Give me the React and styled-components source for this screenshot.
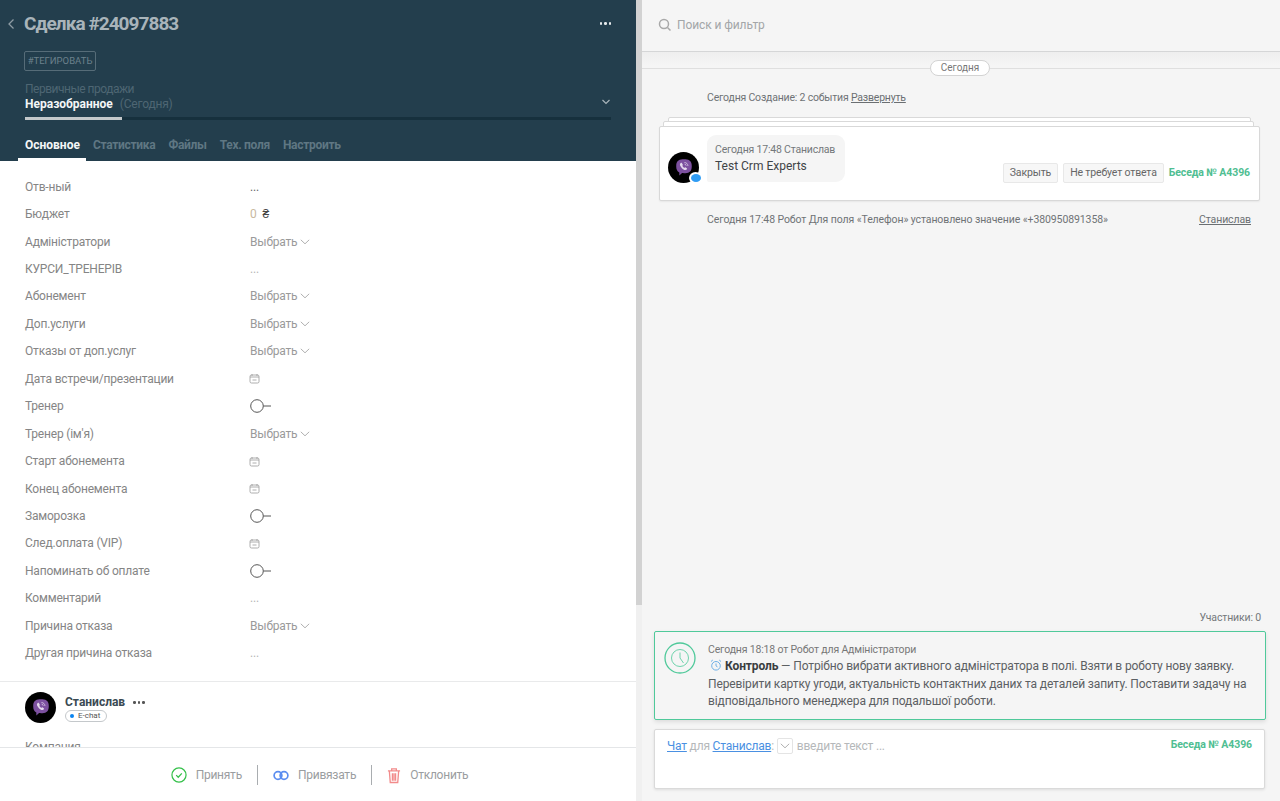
import React from 'react';
import styled, { createGlobalStyle } from 'styled-components';

const Global = createGlobalStyle`
  html, body { margin: 0; padding: 0; height: 100%; overflow: hidden; background: #f5f5f5; }
  body { font-family: Roboto, "Liberation Sans", sans-serif; }
  #root { height: 801px; }
  * { box-sizing: border-box; }
`;
const Page = styled.div`display: flex; width: 1280px; height: 801px; overflow: hidden;`;
const LeftPane = styled.div`width: 636px; height: 801px; display: flex; flex-direction: column; background: #fff; overflow: hidden;`;
const ScrollGutter = styled.div`width: 6px; height: 801px; background: #f0f0f0; display: flex; flex-direction: column; flex: none;`;
const ScrollThumb = styled.div`width: 100%; height: 605px; background: #d2d2d2;`;
const Header = styled.header`height: 161px; flex: none; background: #233e4d; display: flex; flex-direction: column; padding: 11px 25px 0 24px;`;
const TitleRow = styled.div`display: flex; align-items: center; height: 25px; position: relative;`;
const Back = styled.svg`width: 8px; height: 12px; margin-left: -17px; margin-right: 9px; flex: none;`;
const Title = styled.h1`margin: 0; font: 700 19px/25px Roboto, sans-serif; color: #a9b4ba; letter-spacing: -0.95px; flex: 1;`;
const More = styled.div`display: flex; gap: 2px;`;
const Dot = styled.i`width: 2.5px; height: 2.5px; border-radius: 50%; background: ${p => p.$c || '#e6eaec'}; display: block;`;
const TagBtn = styled.div`align-self: flex-start; margin-top: 15px; height: 20px; width: 72px; border: 1px solid #566c78; border-radius: 2px; font: 400 9.5px/18px Roboto, sans-serif; color: #6c818c; text-align: center; white-space: nowrap;`;
const PipeLabel = styled.div`margin-top: 13px; padding-left: 1px; font: 400 12px/11px Roboto, sans-serif; letter-spacing: -0.5px; color: #4e6673;`;
const StatusRow = styled.div`display: flex; align-items: center; justify-content: space-between; padding-left: 1px; height: 14px;`;
const Status = styled.span`font: 700 12px/14px Roboto, sans-serif; color: #f4f6f7;`;
const StatusDate = styled.span`font: 400 12px/14px Roboto, sans-serif; color: #4e6673; margin-left: 7px; letter-spacing: -0.2px;`;
const Progress = styled.div`height: 3px; margin: 8px 0 0 1px; background: #16303d;`;
const ProgressFill = styled.div`height: 100%; width: 97px; background: #c4c8ca;`;
const Tabs = styled.nav`margin-top: 12px; display: flex; gap: 13px; flex: 1;`;
const Tab = styled.div`font: 700 12px/26px Roboto, sans-serif; color: ${p => p.$active ? '#f4f6f7' : '#5f7783'}; letter-spacing: ${p => p.$active ? '0' : '-0.3px'}; position: relative; white-space: nowrap; padding-left: ${p => p.$active ? '1px' : 0};
  ${p => p.$active && `&::after { content: ""; position: absolute; left: -6px; right: -6px; bottom: 0; height: 3px; background: #fff; }`}`;
const Body = styled.div`flex: 1; min-height: 0; overflow: hidden; background: #fff;`;
const Fields = styled.div`padding: 12px 0 0 25px;`;
const Row = styled.div`display: flex; align-items: center; height: 27.45px; font: 400 12px/16px Roboto, sans-serif; letter-spacing: -0.2px;`;
const Label = styled.div`width: 225px; color: #858585; flex: none;`;
const Value = styled.div`display: flex; align-items: center; gap: 3px; color: ${p => p.$c || '#9a9a9a'};`;
const BudgetNum = styled.span`color: #c9b9a0; margin-right: 3px;`;
const Currency = styled.span`color: #444;`;
const DateIcon = styled.svg`width: 11px; height: 11px; margin-left: -1px;`;
const Divider = styled.div`height: 1px; background: #e9eaeb; margin-top: 14.5px;`;
const Contact = styled.div`display: flex; padding: 10px 25px 0; gap: 9px;`;
const Avatar = styled.div`width: 31px; height: 31px; border-radius: 50%; background: #000; display: flex; align-items: center; justify-content: center; position: relative; flex: none;`;
const ContactInfo = styled.div`display: flex; flex-direction: column; padding-top: 2px;`;
const NameRow = styled.div`display: flex; align-items: center; gap: 8px; height: 16px;`;
const ContactName = styled.span`font: 700 12px/16px Roboto, sans-serif; color: #3b4a53;`;
const Chip = styled.div`display: flex; align-items: center; gap: 4px; width: 42px; height: 12px; border: 1px solid #c4c8cb; border-radius: 6px; padding-left: 4px; font: 400 8px/10px Roboto, sans-serif; color: #555;`;
const ChipDot = styled.i`width: 4px; height: 4px; border-radius: 50%; background: #0a84f0;`;
const CutLabel = styled.div`margin: 16px 0 0 25px; font: 400 12px/16px Roboto, sans-serif; letter-spacing: -0.2px; color: #858585;`;
const Footer = styled.footer`height: 54px; flex: none; background: #fff; border-top: 1px solid #e4e6e8; display: flex; align-items: center; justify-content: center; padding: 1px 0 0 3px;`;
const Action = styled.div`display: flex; align-items: center; gap: 9px; padding: 0 15px; height: 20px; font: 400 12px/16px Roboto, sans-serif; letter-spacing: -0.25px; color: #9a9da0;
  & + & { border-left: 1px solid #a9adb0; }`;
const RightPane = styled.div`flex: 1; height: 801px; display: flex; flex-direction: column; background: #f5f5f5;`;
const SearchBar = styled.div`height: 52px; flex: none; border-bottom: 1px solid #d5d6d7; display: flex; align-items: center; gap: 5px; padding: 0 0 2px 16px; font: 400 12px/16px Roboto, sans-serif; letter-spacing: -0.1px; color: #a3a6a8;`;
const Feed = styled.div`flex: 1; min-height: 0; display: flex; flex-direction: column; background: linear-gradient(#eeeeee, #f5f5f5 14px);`;
const DateSep = styled.div`display: flex; align-items: center; height: 16px; margin-top: 8px;
  &::before, &::after { content: ""; height: 1px; background: #dfdfdf; }
  &::before { width: 288px; flex: none; }
  &::after { flex: 1; }`;
const DatePill = styled.div`width: 60px; height: 16px; border: 1px solid #d3d3d3; border-radius: 8px; background: #fff; font: 400 10px/14px Roboto, sans-serif; color: #777; text-align: center;`;
const EventLine = styled.div`display: flex; justify-content: space-between; padding: ${p => p.$p}; font: 400 10.5px/14px Roboto, sans-serif; letter-spacing: ${p => p.$ls}; color: #6f7376;`;
const EventLink = styled.span`text-decoration: underline; color: #6b6f72;`;
const Stack = styled.div`margin: 12px 20px 0 17px; position: relative; padding-top: 9px;`;
const StackEdge = styled.div`position: absolute; top: ${p => p.$t}px; left: ${p => p.$l}px; right: ${p => p.$r}px; height: 10px; border: 1px solid #d9d9d9; border-radius: 2px; background: #fff;`;
const Card = styled.div`position: relative; height: 75px; background: #fff; border: 1px solid #d8d8d8; border-radius: 2px; display: flex; align-items: flex-end; padding: 0 9px 17px 8px; box-shadow: 0 1px 2px rgba(0,0,0,.06);`;
const Bubble = styled.div`width: 138px; height: 47px; margin: 0 0 1px 8px; border-radius: 9px 9px 9px 2px; background: #f5f5f5; padding: 8px;`;
const BubbleMeta = styled.div`font: 400 10.5px/13px Roboto, sans-serif; letter-spacing: -0.2px; color: #74787b; white-space: nowrap;`;
const BubbleText = styled.div`font: 400 12px/18px Roboto, sans-serif; color: #3f4447; margin-top: 1px; white-space: nowrap;`;
const CardActions = styled.div`margin-left: auto; display: flex; align-items: center; gap: 5px;`;
const SmallBtn = styled.div`height: 20px; padding: 0 6px; border: 1px solid #e8e8e8; border-radius: 2px; background: #f7f7f7; font: 400 10.5px/18px Roboto, sans-serif; letter-spacing: -0.15px; color: #666; white-space: nowrap;`;
const Conv = styled.span`font: 700 10.5px/14px Roboto, sans-serif; letter-spacing: -0.1px; color: #4fbe92; white-space: nowrap;`;
const Spacer = styled.div`flex: 1;`;
const Members = styled.div`font: 400 10.5px/14px Roboto, sans-serif; letter-spacing: -0.15px; color: #74787b; text-align: right; padding-right: 19px; margin-bottom: 6px;`;
const TaskCard = styled.div`margin: 0 14px 0 12px; height: 89px; border: 1px solid #4fc99a; border-radius: 2px; background: #f5f5f5; box-shadow: 0 2px 4px rgba(0,0,0,.1); display: flex; padding: 11px 8px 0 9px; gap: 12px;`;
const TaskIcon = styled.svg`width: 32px; height: 32px; flex: none; margin-top: -1px;`;
const TaskBody = styled.div`min-width: 0;`;
const TaskMeta = styled.div`font: 400 10.5px/14px Roboto, sans-serif; letter-spacing: -0.17px; color: #777; margin-bottom: 1px;`;
const TaskText = styled.div`font: 400 12px/17.5px Roboto, sans-serif; letter-spacing: -0.12px; color: #5c6063; b { color: #3a3d40; }`;
const Alarm = styled.svg`width: 12px; height: 12px; margin: 0 3px 0 2px; vertical-align: -1px;`;
const Composer = styled.div`margin: 9px 15px 0 12px; height: 60px; background: #fff; border: 1px solid #dadada; border-radius: 2px; box-shadow: 0 1px 3px rgba(0,0,0,.1); display: flex; align-items: flex-start; padding: 8px 12px 0 12px; font: 400 12px/16px Roboto, sans-serif; letter-spacing: -0.2px; color: #b5b8ba;`;
const ChatLink = styled.span`color: #4a90e2; text-decoration: underline;`;
const Selector = styled.span`display: inline-flex; width: 16px; height: 16px; border: 1px solid #e4e4e4; border-radius: 2px; align-items: center; justify-content: center; margin: 0 1px 0 3px; vertical-align: top;`;
const ComposerLine = styled.div`flex: 1; white-space: nowrap;`;
const BottomGap = styled.div`height: 12px; flex: none;`;
const CardBadge = styled.span`position: absolute; right: -3px; bottom: -1px; width: 13px; height: 12px; border-radius: 50%; background: #fff; display: flex; align-items: center; justify-content: center;`;
const BadgeCore = styled.i`width: 10px; height: 8px; border-radius: 50%; background: #2f9cf4; display: block;`;

const Chevron = () => <svg width="10" height="6" viewBox="0 0 10 6" fill="none"><path d="M.8.8 5 4.800 9.200.8" stroke="#b0b0b0" strokeWidth="1"/></svg>;
const Calendar = () => <DateIcon viewBox="0 0 11 11" fill="none" stroke="#999" strokeWidth=".8"><rect x="1" y="2" width="9" height="8" rx="1.500"/><path d="M3 1v2M8 1v2M1 4h9M3.500 7h4"/></DateIcon>;
const Toggle = () => <svg width="22" height="14" viewBox="0 0 22 14" fill="none" stroke="#555" strokeWidth="1"><circle cx="7" cy="7" r="6.300"/><path d="M13.500 7H21"/></svg>;
const Viber = () => <svg width="22" height="22" viewBox="0 0 24 24"><path d="M12 2.500c-4.500 0-8.500.8-8.500 7.500 0 3.400 1 5.600 3.400 6.800v3.400l3-2.700c.7.1 1.400.1 2.100.1 4.500 0 8.500-.9 8.500-7.600S16.500 2.500 12 2.500Z" fill="#7d51a0"/><path d="M8.500 6.500c-1 .7-1.200 1.800-.6 3 1 2 2.500 3.600 4.600 4.600 1 .4 2 .2 2.700-.7.3-.4.200-.9-.2-1.200l-1.200-.8c-.4-.3-.8-.2-1.100.2l-.3.3c-1-.5-1.800-1.300-2.300-2.300l.4-.4c.3-.3.3-.7.100-1L9.800 6.700c-.3-.4-.9-.5-1.300-.2Z" fill="#e5daee"/><path d="M12.500 6c2.200.1 3.700 1.600 3.800 3.800M12.700 7.800c1 .1 1.600.7 1.700 1.700" stroke="#e5daee" strokeWidth=".8" fill="none"/></svg>;

const fields = [
  ['Отв-ный', 'dots'], ['Бюджет', 'budget'], ['Адміністратори', 'select'], ['КУРСИ_ТРЕНЕРІВ', 'faint'],
  ['Абонемент', 'select'], ['Доп.услуги', 'select'], ['Отказы от доп.услуг', 'select'], ['Дата встречи/презентации', 'date'],
  ['Тренер', 'toggle'], ['Тренер (ім\'я)', 'select'], ['Старт абонемента', 'date'], ['Конец абонемента', 'date'],
  ['Заморозка', 'toggle'], ['След.оплата (VIP)', 'date'], ['Напоминать об оплате', 'toggle'], ['Комментарий', 'faint'],
  ['Причина отказа', 'select'], ['Другая причина отказа', 'faint'],
];
const renderValue = t => {
  if (t === 'dots') return <Value $c="#666">...</Value>;
  if (t === 'faint') return <Value $c="#b5b5b5">...</Value>;
  if (t === 'budget') return <Value><BudgetNum>0</BudgetNum><Currency>₴</Currency></Value>;
  if (t === 'select') return <Value>Выбрать <Chevron /></Value>;
  if (t === 'date') return <Value><Calendar /></Value>;
  return <Value><Toggle /></Value>;
};

export default function App() {
  return (
    <Page>
      <Global />
      <LeftPane>
        <Header>
          <TitleRow>
            <Back viewBox="0 0 8 12" fill="none"><path d="M6.500 1.500 2 6l4.500 4.500" stroke="#8e9ca4" strokeWidth="1.300"/></Back>
            <Title>Сделка #24097883</Title>
            <More><Dot /><Dot /><Dot /></More>
          </TitleRow>
          <TagBtn>#ТЕГИРОВАТЬ</TagBtn>
          <PipeLabel>Первичные продажи</PipeLabel>
          <StatusRow>
            <span><Status>Неразобранное</Status><StatusDate>(Сегодня)</StatusDate></span>
            <svg width="10" height="6" viewBox="0 0 10 6" fill="none"><path d="M1.500 1 5 4.500 8.500 1" stroke="#a9b4ba" strokeWidth="1.200"/></svg>
          </StatusRow>
          <Progress><ProgressFill /></Progress>
          <Tabs>
            <Tab $active>Основное</Tab><Tab>Статистика</Tab><Tab>Файлы</Tab><Tab>Тех. поля</Tab><Tab>Настроить</Tab>
          </Tabs>
        </Header>
        <Body>
          <Fields>
            {fields.map(([l, t]) => <Row key={l}><Label>{l}</Label>{renderValue(t)}</Row>)}
          </Fields>
          <Divider />
          <Contact>
            <Avatar><Viber /></Avatar>
            <ContactInfo>
              <NameRow><ContactName>Станислав</ContactName><More><Dot $c="#555" /><Dot $c="#555" /><Dot $c="#555" /></More></NameRow>
              <Chip><ChipDot />E-chat</Chip>
            </ContactInfo>
          </Contact>
          <CutLabel>Компания</CutLabel>
        </Body>
        <Footer>
          <Action><svg width="16" height="16" viewBox="0 0 17 17" fill="none" stroke="#35c04a" strokeWidth="1.300"><circle cx="8.500" cy="8.500" r="7.500"/><path d="m5.500 8.700 2.200 2.200 3.800-4.200"/></svg>Принять</Action>
          <Action><svg width="16" height="11" viewBox="0 0 16 11" fill="none" stroke="#5b8df0" strokeWidth="1.700"><circle cx="5" cy="5.500" r="3.900"/><circle cx="11" cy="5.500" r="3.900"/></svg>Привязать</Action>
          <Action><svg width="14" height="17" viewBox="0 0 15 17" fill="none" stroke="#f28b8b" strokeWidth="1.400"><path d="M1 3.500h13M5 3.500V1.500h5v2M2.500 3.500l1 12.500h8l1-12.500M5.800 6v8M7.500 6v8M9.200 6v8"/></svg>Отклонить</Action>
        </Footer>
      </LeftPane>
      <ScrollGutter><ScrollThumb /></ScrollGutter>
      <RightPane>
        <SearchBar>
          <svg width="14" height="14" viewBox="0 0 14 14" fill="none" stroke="#a8a8a8" strokeWidth="1.500"><circle cx="6" cy="6" r="4.500"/><path d="m9.500 9.500 3 3"/></svg>
          Поиск и фильтр
        </SearchBar>
        <Feed>
          <DateSep><DatePill>Сегодня</DatePill></DateSep>
          <EventLine $p="15px 0 0 65px" $ls="-0.2px"><span>Сегодня Создание: 2 события <EventLink>Развернуть</EventLink></span></EventLine>
          <Stack>
            <StackEdge $t={0} $l={9} $r={9} />
            <StackEdge $t={4} $l={4} $r={6} />
            <Card>
              <Avatar><Viber /><CardBadge><BadgeCore /></CardBadge></Avatar>
              <Bubble><BubbleMeta>Сегодня 17:48 Станислав</BubbleMeta><BubbleText>Test Crm Experts</BubbleText></Bubble>
              <CardActions><SmallBtn>Закрыть</SmallBtn><SmallBtn>Не требует ответа</SmallBtn><Conv>Беседа № A4396</Conv></CardActions>
            </Card>
          </Stack>
          <EventLine $p="12px 29px 0 65px" $ls="-0.1px"><span>Сегодня 17:48 Робот Для поля «Телефон» установлено значение «+380950891358»</span><EventLink>Станислав</EventLink></EventLine>
          <Spacer />
          <Members>Участники: 0</Members>
          <TaskCard>
            <TaskIcon viewBox="0 0 32 32" fill="none" stroke="#4fc99a"><circle cx="16" cy="16" r="15" strokeWidth="1.300"/><circle cx="16" cy="16" r="8.500" stroke="#6fd3ac"/><path d="M16 10.500V16l3.500 5" stroke="#6fd3ac"/></TaskIcon>
            <TaskBody>
              <TaskMeta>Сегодня 18:18 от Робот для Адміністратори</TaskMeta>
              <TaskText><Alarm viewBox="0 0 12 12" fill="none" stroke="#6fb0e6" strokeWidth="1"><circle cx="6" cy="6.800" r="4.300"/><path d="M6 4.500v2.400l1.500 1M1 2.500 2.800 1M11 2.500 9.200 1"/></Alarm><b>Контроль</b> — Потрібно вибрати активного адміністратора в полі. Взяти в роботу нову заявку. Перевірити картку угоди, актуальність контактних даних та деталей запиту. Поставити задачу на відповідального менеджера для подальшої роботи.</TaskText>
            </TaskBody>
          </TaskCard>
          <Composer>
            <ComposerLine><ChatLink>Чат</ChatLink> для <ChatLink>Станислав</ChatLink>:<Selector><Chevron /></Selector> введите текст ...</ComposerLine>
            <Conv>Беседа № A4396</Conv>
          </Composer>
          <BottomGap />
        </Feed>
      </RightPane>
    </Page>
  );
}
